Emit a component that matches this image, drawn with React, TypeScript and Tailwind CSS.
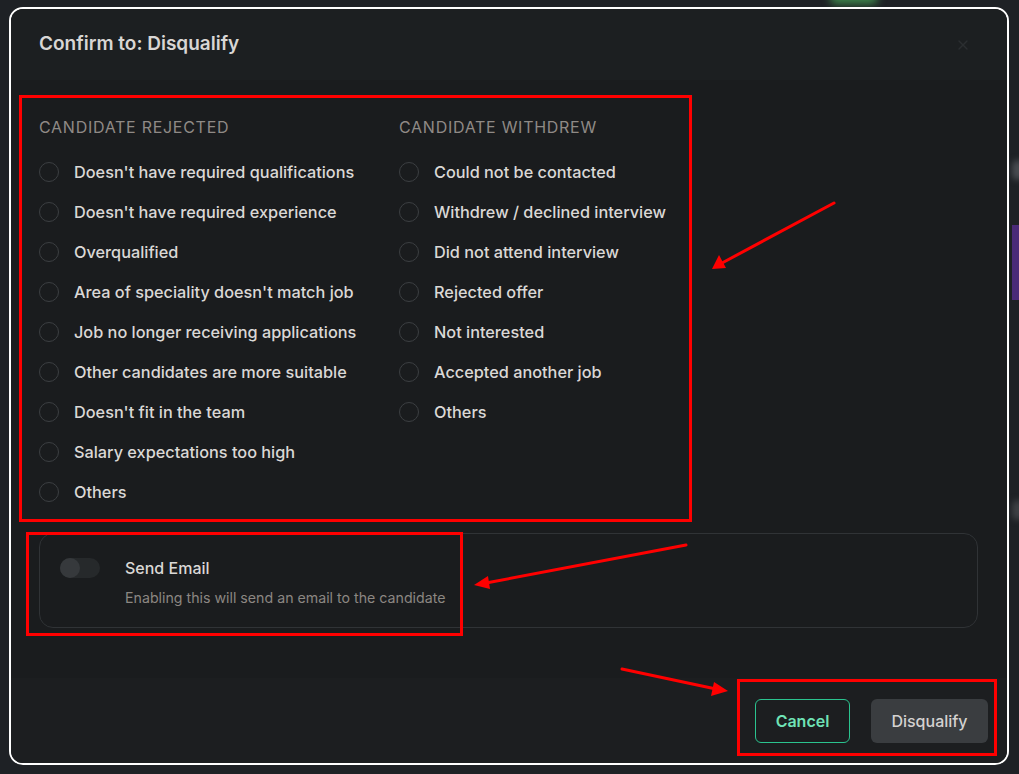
import { X } from "lucide-react";

const rejected = [
  "Doesn't have required qualifications",
  "Doesn't have required experience",
  "Overqualified",
  "Area of speciality doesn't match job",
  "Job no longer receiving applications",
  "Other candidates are more suitable",
  "Doesn't fit in the team",
  "Salary expectations too high",
  "Others",
];

const withdrew = [
  "Could not be contacted",
  "Withdrew / declined interview",
  "Did not attend interview",
  "Rejected offer",
  "Not interested",
  "Accepted another job",
  "Others",
];

function ReasonGroup({ title, items }: { title: string; items: string[] }) {
  return (
    <div className="w-[360px]">
      <div className="h-5 text-[16px] leading-5 uppercase text-[#8f8a86] tracking-[0.045em]">{title}</div>
      <div className="mt-[15px] flex flex-col">
        {items.map((item) => (
          <label key={item} className="flex h-10 items-center gap-[15px] cursor-pointer">
            <span className="h-5 w-5 shrink-0 rounded-full border border-[#3c3f42]" />
            <span className="text-[16.3px] font-medium text-[#dad8d6]">{item}</span>
          </label>
        ))}
      </div>
    </div>
  );
}

export default function App() {
  return (
    <div className="relative h-[774px] w-full overflow-hidden bg-[#1e2125] pl-[9px] pt-[7px]" style={{ fontFamily: "Inter, 'Noto Sans', sans-serif" }}>
      {/* blurred page behind the modal */}
      <div className="absolute left-[830px] top-[-8px] h-3 w-12 rounded-full bg-[#3f8a4d] blur-[4px]" />
      <div className="absolute left-[1012px] top-[225px] h-[75px] w-3 bg-[#4a2a78]" />
      <div className="absolute left-[1012px] top-[160px] h-5 w-3 rounded-full bg-[#4a4d52] blur-[3px]" />
      <div className="absolute left-[1012px] top-[500px] h-5 w-3 rounded-full bg-[#3f4246] blur-[3px]" />

      <div className="relative flex h-[758px] w-[1000px] flex-col overflow-hidden rounded-[14px] border-2 border-white bg-[#1a1c1e]">
        {/* header */}
        <div className="flex h-[71px] items-center justify-between bg-[#1c1f21] pl-[28px] pr-[36px]">
          <h2 className="text-[19px] font-semibold text-[#d8d6d4]">Confirm to: Disqualify</h2>
          <X className="h-4 w-4 text-[#2b2e31]" strokeWidth={2} />
        </div>

        {/* body */}
        <div className="flex-1 pl-[28px] pr-[29px] pt-[37px]">
          <div className="flex">
            <ReasonGroup title="Candidate Rejected" items={rejected} />
            <ReasonGroup title="Candidate Withdrew" items={withdrew} />
          </div>

          <div className="mt-[21px] flex h-[95px] gap-[25px] rounded-[14px] border border-[#303336] pl-[20px] pt-[24px]">
            <div className="relative h-5 w-10 rounded-full bg-[#26292b]">
              <span className="absolute left-0 top-0 h-5 w-5 rounded-full bg-[#36393c]" />
            </div>
            <div className="flex flex-col">
              <span className="text-[16px] font-medium leading-5 text-[#dad8d6]">Send Email</span>
              <span className="mt-[10px] text-[14.2px] leading-5 text-[#8c8782]">Enabling this will send an email to the candidate</span>
            </div>
          </div>
        </div>

        {/* footer */}
        <div className="flex h-[85px] items-start justify-end gap-[21px] bg-[#1c1e20] pr-[19px] pt-[21px]">
          <button className="h-11 w-[95px] rounded-md border border-[#2bc48f] text-[16px] font-semibold text-[#6fe3b6]">
            Cancel
          </button>
          <button className="h-11 w-[117px] rounded-md bg-[#3a3d40] text-[16px] font-medium text-[#d4d2d0]">
            Disqualify
          </button>
        </div>
      </div>

      {/* annotation overlays */}
      <div className="pointer-events-none absolute left-[19px] top-[95px] h-[427px] w-[673px] border-[3px] border-[#ff0000]" />
      <div className="pointer-events-none absolute left-[26px] top-[532px] h-[104px] w-[437px] border-[3px] border-[#ff0000]" />
      <div className="pointer-events-none absolute left-[737px] top-[679px] h-[77px] w-[260px] border-[3px] border-[#ff0000]" />
      <svg className="pointer-events-none absolute left-0 top-0" width="1019" height="774">
        <g stroke="#ff0000" strokeWidth="3" strokeLinecap="round">
          <line x1="834" y1="203" x2="722" y2="263" />
          <line x1="686" y1="545" x2="486" y2="583" />
          <line x1="622" y1="669" x2="716" y2="689" />
        </g>
        <g fill="#ff0000">
          <polygon points="712,269 719,255 726,268" />
          <polygon points="474,585 488,576 490,589" />
          <polygon points="728,691 714,682 711,696" />
        </g>
      </svg>
    </div>
  );
}
